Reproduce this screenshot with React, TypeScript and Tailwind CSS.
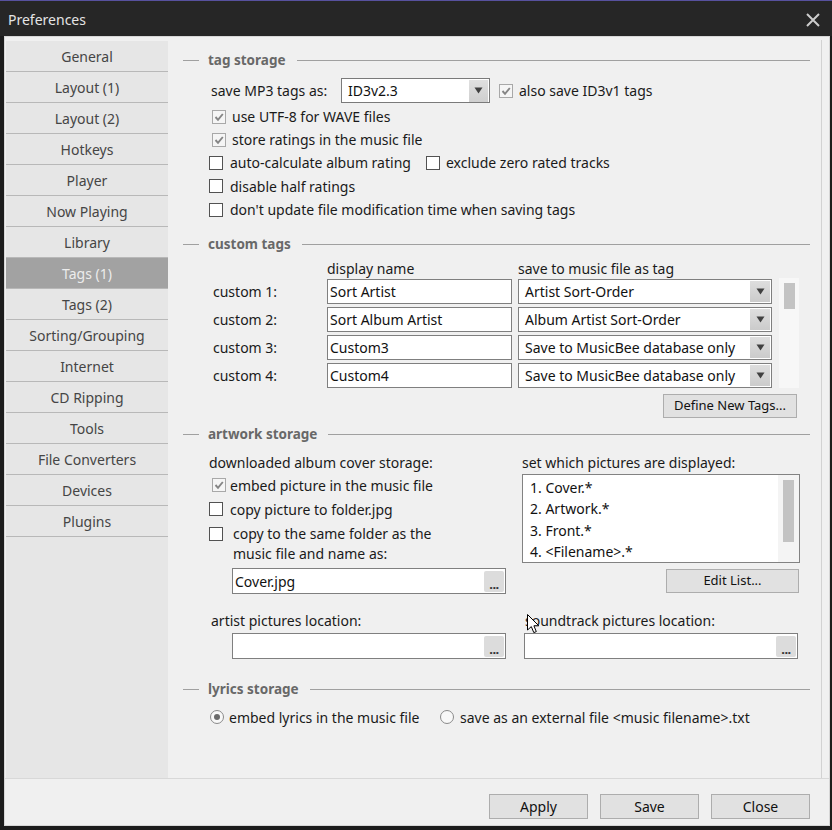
import React from "react";

const items = [
  "General",
  "Layout (1)",
  "Layout (2)",
  "Hotkeys",
  "Player",
  "Now Playing",
  "Library",
  "Tags (1)",
  "Tags (2)",
  "Sorting/Grouping",
  "Internet",
  "CD Ripping",
  "Tools",
  "File Converters",
  "Devices",
  "Plugins",
];

function Check({ checked }: { checked?: boolean }) {
  if (checked) {
    return (
      <span className="w-[14px] h-[14px] ml-[3px] border border-[#a8a8a8] bg-[#f5f5f5] flex items-center justify-center shrink-0">
        <svg width="10" height="10" viewBox="0 0 10 10">
          <path d="M1.5 5 L4 7.8 L8.8 2" fill="none" stroke="#858585" strokeWidth="1.9" />
        </svg>
      </span>
    );
  }
  return <span className="block w-[14px] h-[14px] border border-[#525252] bg-white shrink-0" />;
}

function Radio({ checked }: { checked?: boolean }) {
  return (
    <span className="w-[14px] h-[14px] rounded-full border border-[#8a8a8a] bg-[#f8f8f8] flex items-center justify-center shrink-0">
      {checked && <span className="block w-[6px] h-[6px] rounded-full bg-[#6a6a6a]" />}
    </span>
  );
}

function Arrow() {
  return (
    <svg width="9" height="7" viewBox="0 0 9 7">
      <path d="M0.5 0.5 L8.5 0.5 L4.5 6.5 Z" fill="#404040" />
    </svg>
  );
}

function Header({ title }: { title: string }) {
  return (
    <div className="flex items-center h-[20px]">
      <div className="ml-[15px] w-[16px] h-px bg-[#a0a0a0]" />
      <span className="ml-[9px] mr-[11px] font-bold text-[#686868] text-[13.5px]">{title}</span>
      <div className="flex-1 mr-[11px] h-px bg-[#a0a0a0]" />
    </div>
  );
}

function DotsInput({ value }: { value?: string }) {
  return (
    <div className="w-[274px] h-[26px] border border-[#7f7f7f] bg-white flex items-center">
      <span className="flex-1 pl-[2px] text-[#111]">{value}</span>
      <span className="w-[20px] h-[21px] mr-[1px] bg-[#dcdcdc] rounded-[2px] flex items-end justify-center text-[13px] font-bold leading-[15px] tracking-[-0.5px] text-[#333]">
        ...
      </span>
    </div>
  );
}

function TagSelect({ value }: { value: string }) {
  return (
    <div className="w-[254px] h-[25px] border border-[#7f7f7f] bg-white flex items-center">
      <span className="flex-1 pl-[6px] text-[#111] whitespace-nowrap">{value}</span>
      <span className="w-[20px] h-[21px] mr-[1px] bg-gradient-to-b from-[#dedede] to-[#cbcbcb] flex items-center justify-center">
        <Arrow />
      </span>
    </div>
  );
}

function Btn({ label, cls }: { label: string; cls: string }) {
  return (
    <div
      className={
        "border border-[#adadad] bg-[#e1e1e1] flex items-center justify-center text-[#111] " + cls
      }
    >
      {label}
    </div>
  );
}

export default function App() {
  return (
    <div className="w-[832px] h-[830px] bg-[#1c1c1c] flex flex-col font-['Noto_Sans',sans-serif] text-[14px] text-[#1a1a1a] overflow-hidden">
      {/* title bar */}
      <div className="h-[36px] shrink-0 bg-[#262626] border-t border-[#57519e] flex items-center justify-between pl-[8px] pr-[12px]">
        <span className="text-[14px] text-[#e4e4e4] mt-[2px]">Preferences</span>
        <svg width="14" height="14" viewBox="0 0 14 14" className="mt-[2px]">
          <path d="M1 1 L13 13 M13 1 L1 13" stroke="#cccccc" strokeWidth="2" />
        </svg>
      </div>

      {/* body */}
      <div className="h-[790px] ml-[4px] mr-[2px] bg-[#f0f0f0] border border-[#d6d6d6] flex flex-col">
        <div className="pt-[4px] flex h-[741px]">
          {/* sidebar */}
          <div className="ml-[1px] w-[162px] bg-[#e6e6e6] flex flex-col">
            {items.map((it) => (
              <div
                key={it}
                className={
                  "h-[31px] border-b border-[#b8b8b8] flex items-center justify-center text-[14px] " +
                  (it === "Tags (1)" ? "bg-[#a2a2a2] text-[#ececec]" : "text-[#454545]")
                }
              >
                {it}
              </div>
            ))}
          </div>

          {/* content */}
          <div className="flex-1 mr-[7px] border-r border-[#d2d2d2] bg-[#f0f0f0] flex flex-col -mt-[1px]">
            {/* tag storage */}
            <div className="mt-[10px]">
              <Header title="tag storage" />
            </div>
            <div className="pl-[41px]">
              <div className="mt-[8px] flex items-center h-[25px]">
                <span className="ml-[2px] w-[130px]">save MP3 tags as:</span>
                <div className="w-[149px] h-[25px] border border-[#7a7a7a] bg-white flex items-center">
                  <span className="flex-1 pl-[6px] text-[#111]">ID3v2.3</span>
                  <span className="w-[19px] h-[22px] mr-[1px] bg-gradient-to-b from-[#e0e0e0] to-[#cfcfcf] flex items-center justify-center">
                    <Arrow />
                  </span>
                </div>
                <span className="ml-[6px] flex items-center gap-[6px]">
                  <Check checked />
                  <span>also save ID3v1 tags</span>
                </span>
              </div>
              <div className="mt-[2px] flex flex-col">
                <div className="h-[23px] flex items-center gap-[6px]">
                  <Check checked />
                  <span>use UTF-8 for WAVE files</span>
                </div>
                <div className="h-[23px] flex items-center gap-[6px]">
                  <Check checked />
                  <span>store ratings in the music file</span>
                </div>
                <div className="h-[23px] flex items-center">
                  <div className="w-[217px] flex items-center gap-[7px]">
                    <Check />
                    <span>auto-calculate album rating</span>
                  </div>
                  <div className="flex items-center gap-[6px]">
                    <Check />
                    <span>exclude zero rated tracks</span>
                  </div>
                </div>
                <div className="h-[24px] flex items-center gap-[7px]">
                  <Check />
                  <span>disable half ratings</span>
                </div>
                <div className="h-[23px] flex items-center gap-[7px]">
                  <Check />
                  <span>don't update file modification time when saving tags</span>
                </div>
              </div>
            </div>

            {/* custom tags */}
            <div className="mt-[13px]">
              <Header title="custom tags" />
            </div>
            <div className="mt-[5px] h-[18px] flex items-center pl-[159px]">
              <span className="w-[191px]">display name</span>
              <span>save to music file as tag</span>
            </div>
            <div className="mt-[1px] flex items-start pl-[45px]">
              <div className="pt-[1px] flex flex-col gap-[3px]">
                {[
                  ["custom 1:", "Sort Artist", "Artist Sort-Order"],
                  ["custom 2:", "Sort Album Artist", "Album Artist Sort-Order"],
                  ["custom 3:", "Custom3", "Save to MusicBee database only"],
                  ["custom 4:", "Custom4", "Save to MusicBee database only"],
                ].map(([l, v, s]) => (
                  <div key={l} className="flex items-center h-[25px]">
                    <span className="w-[114px]">{l}</span>
                    <div className="w-[185px] h-[25px] border border-[#7f7f7f] bg-white flex items-center pl-[2px] text-[#111]">
                      {v}
                    </div>
                    <div className="ml-[6px]">
                      <TagSelect value={s} />
                    </div>
                  </div>
                ))}
              </div>
              <div className="ml-[7px] w-[20px] h-[110px] bg-[#f7f7f7] flex justify-center pt-[5px]">
                <div className="w-[11px] h-[26px] bg-[#c3c3c3]" />
              </div>
            </div>
            <div className="mt-[6px] flex justify-end pr-[24px]">
              <Btn label="Define New Tags..." cls="w-[134px] h-[24px] text-[13px]" />
            </div>

            {/* artwork storage */}
            <div className="mt-[6px]">
              <Header title="artwork storage" />
            </div>
            <div className="mt-[9px] flex pl-[41px]">
              <div className="w-[297px] flex flex-col">
                <div className="h-[18px] flex items-center">downloaded album cover storage:</div>
                <div className="mt-[2px] h-[24px] flex items-center gap-[6px]">
                  <Check checked />
                  <span className="-ml-[2px]">embed picture in the music file</span>
                </div>
                <div className="h-[24px] flex items-center gap-[7px]">
                  <Check />
                  <span>copy picture to folder.jpg</span>
                </div>
                <div className="mt-[3px] flex items-start">
                  <div className="mt-[3px] flex">
                    <Check />
                  </div>
                  <div className="ml-[10px] leading-[20px]">
                    copy to the same folder as the
                    <br />
                    music file and name as:
                  </div>
                </div>
                <div className="mt-[4px] ml-[23px]">
                  <DotsInput value="Cover.jpg" />
                </div>
              </div>
              <div className="ml-[16px] w-[278px] flex flex-col">
                <div className="h-[18px] flex items-center">set which pictures are displayed:</div>
                <div className="mt-[3px] h-[89px] border border-[#828282] bg-white flex">
                  <div className="flex-1 pl-[7px] pt-[2px] flex flex-col text-[#111]">
                    <span className="h-[21.5px] flex items-center">1. Cover.*</span>
                    <span className="h-[21.5px] flex items-center">2. Artwork.*</span>
                    <span className="h-[21.5px] flex items-center">3. Front.*</span>
                    <span className="h-[21.5px] flex items-center">4. &lt;Filename&gt;.*</span>
                  </div>
                  <div className="w-[21px] bg-[#f4f4f4] flex justify-center pt-[5px]">
                    <div className="w-[11px] h-[62px] bg-[#c3c3c3]" />
                  </div>
                </div>
                <div className="mt-[6px] flex justify-end pr-[1px]">
                  <Btn label="Edit List..." cls="w-[133px] h-[24px] text-[13px]" />
                </div>
              </div>
            </div>
            <div className="mt-[17px] flex pl-[41px]">
              <div className="w-[297px] flex flex-col">
                <div className="h-[18px] flex items-center ml-[2px]">artist pictures location:</div>
                <div className="mt-[4px] ml-[23px]">
                  <DotsInput />
                </div>
              </div>
              <div className="ml-[18px] flex flex-col">
                <div className="relative h-[18px] flex items-center ml-[1px]">
                  soundtrack pictures location:
                  <svg
                    className="absolute left-[2px] top-[3px]"
                    width="13"
                    height="20"
                    viewBox="0 0 13 20"
                  >
                    <path
                      d="M0.5 0.5 L0.5 16 L4.3 12.6 L6.8 18.6 L9.3 17.6 L6.9 11.8 L11.8 11.8 Z"
                      fill="#ffffff"
                      stroke="#000000"
                      strokeWidth="1"
                    />
                  </svg>
                </div>
                <div className="mt-[4px]">
                  <DotsInput />
                </div>
              </div>
            </div>

            {/* lyrics storage */}
            <div className="mt-[20px]">
              <Header title="lyrics storage" />
            </div>
            <div className="mt-[9px] h-[18px] flex items-center pl-[42px]">
              <div className="w-[230px] flex items-center gap-[5px]">
                <Radio checked />
                <span>embed lyrics in the music file</span>
              </div>
              <div className="flex items-center gap-[6px]">
                <Radio />
                <span>save as an external file &lt;music filename&gt;.txt</span>
              </div>
            </div>
          </div>
        </div>

        {/* footer */}
        <div className="flex-1 border-t border-[#d8d8d8] flex justify-end items-start pt-[15px] pr-[19px] gap-[12px] text-[14px]">
          <Btn label="Apply" cls="w-[99px] h-[25px]" />
          <Btn label="Save" cls="w-[99px] h-[25px]" />
          <Btn label="Close" cls="w-[99px] h-[25px]" />
        </div>
      </div>
    </div>
  );
}
